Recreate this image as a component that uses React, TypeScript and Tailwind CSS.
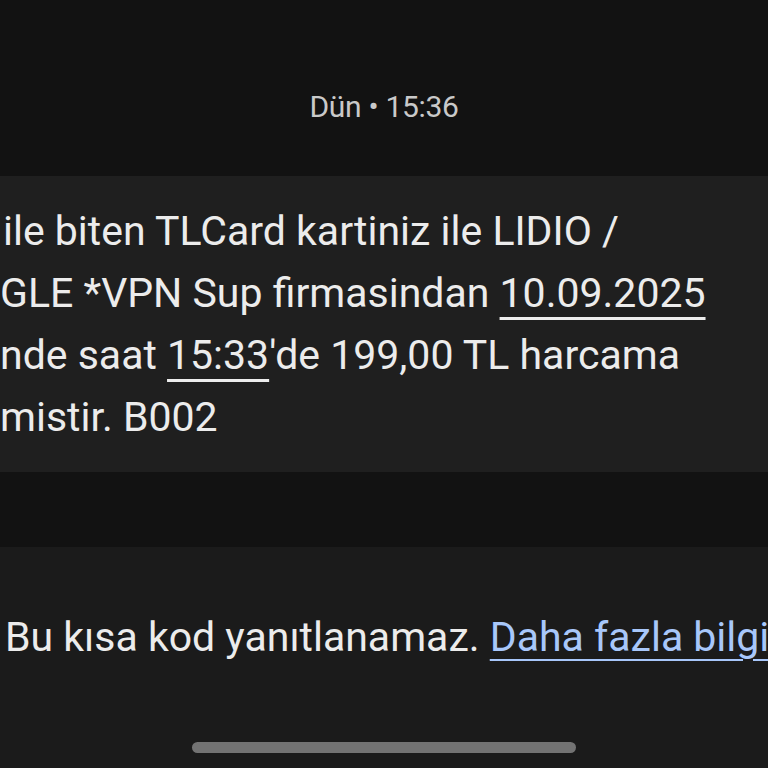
import React from "react";

export default function App() {
  const font = { fontFamily: "Roboto, 'Noto Sans', sans-serif" };
  return (
    <div className="w-[768px] h-[768px] overflow-hidden bg-[#121212] flex flex-col" style={font}>
      <div className="h-[176px] shrink-0 pt-[87px] flex justify-center">
        <div className="text-[30px] leading-[40px] text-[#c9c9c9] whitespace-nowrap tracking-[-0.3px]">Dün • 15:36</div>
      </div>
      <div className="h-[296px] shrink-0 bg-[#1f1f1f] pt-[24px] overflow-hidden">
        <div className="text-[41px] leading-[62px] text-[#ececec] whitespace-nowrap">
          <div className="pl-[3px]">ile biten TLCard kartiniz ile LIDIO /</div>
          <div>
            GLE *VPN Sup firmasindan{" "}
            <span className="underline decoration-[3px] underline-offset-[10px]">10.09.2025</span>
          </div>
          <div>
            nde saat{" "}
            <span className="underline decoration-[3px] underline-offset-[10px]">15:33</span>'de 199,00 TL harcama
          </div>
          <div>mistir. B002</div>
        </div>
      </div>
      <div className="h-[75px] shrink-0 bg-[#121212]" />
      <div className="flex-1 bg-[#1b1b1b] flex flex-col">
        <div className="pt-[66px] pl-[5px] text-[41px] leading-[48px] text-[#ececec] whitespace-nowrap overflow-hidden">
          Bu kısa kod yanıtlanamaz.{" "}
          <span className="text-[#a8c7fa] underline decoration-[3px] underline-offset-[8px]">Daha fazla bilgi</span>
        </div>
        <div className="flex-1" />
        <div className="flex justify-center pb-[15px]">
          <div className="w-[384px] h-[11px] rounded-full bg-[#737373]" />
        </div>
      </div>
    </div>
  );
}
